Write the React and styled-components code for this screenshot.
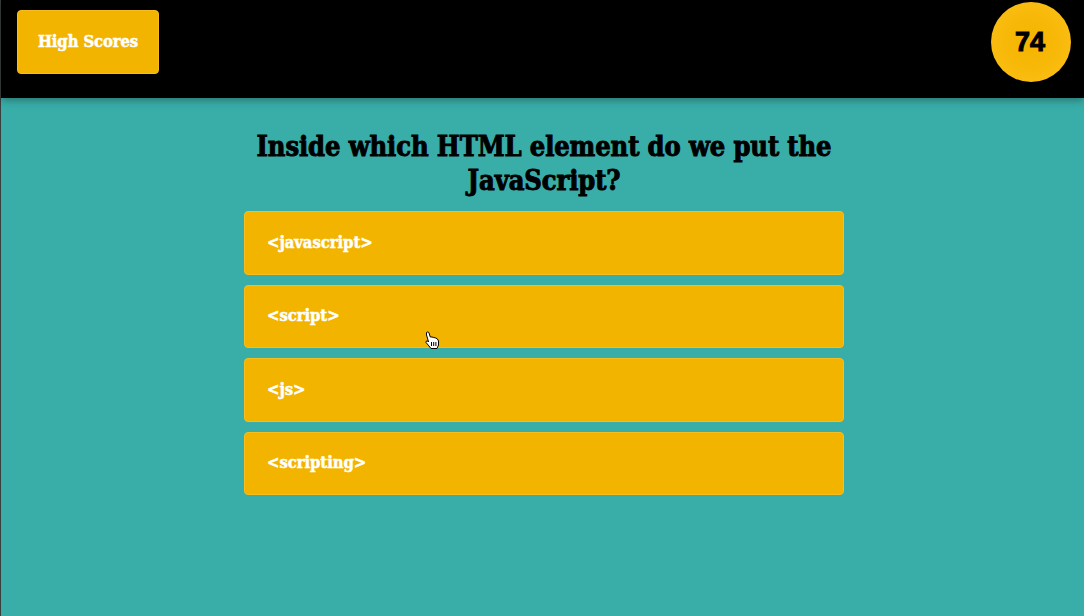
import React from "react";
import styled, { createGlobalStyle } from "styled-components";

const Global = createGlobalStyle`
  html, body { margin: 0; padding: 0; height: 100%; overflow: hidden; background: #39ada8; }
  #root { height: 100%; }
  * { box-sizing: border-box; }
`;

const serif = `"DejaVu Serif Condensed", "DejaVu Serif", serif`;

const Page = styled.div`
  position: relative;
  width: 1084px;
  height: 616px;
  background: #39ada8;
  border-left: 1px solid #3a3f3f;
  font-family: ${serif};
  font-weight: 700;
`;

const Header = styled.header`
  height: 98px;
  background: #000;
  display: flex;
  align-items: flex-start;
  justify-content: space-between;
  padding: 2px 13px 0 16px;
  box-shadow: 0 2px 8px rgba(0, 0, 0, 0.35);
`;

const ScoresButton = styled.button`
  margin-top: 8px;
  width: 142px;
  height: 64px;
  background: #f3b400;
  border: 1px solid #f6bd1c;
  border-radius: 4px;
  color: #fff;
  font: 700 16.5px ${serif};
  letter-spacing: -0.1px;
  padding: 0 0 2px;
  -webkit-text-stroke: 0.5px #fff;
`;

const Timer = styled.div`
  width: 80px;
  height: 80px;
  border-radius: 50%;
  background: radial-gradient(circle, #f5b400 0%, #f7b808 45%, #fdc11a 100%);
  display: flex;
  align-items: center;
  justify-content: center;
  padding-right: 2px;
  color: #000;
  font: 700 27px "Liberation Sans", sans-serif;
  -webkit-text-stroke: 1px #000;
`;

const Main = styled.main`
  width: 600px;
  margin-left: 243px;
  padding-top: 32px;
`;

const Question = styled.h1`
  margin: 0 0 13px;
  padding: 0 8px;
  text-align: center;
  color: #000;
  font: 700 27px/34px ${serif};
  letter-spacing: -0.1px;
  -webkit-text-stroke: 0.9px #000;
`;

const Answers = styled.div`
  display: flex;
  flex-direction: column;
  gap: 10px;
`;

const Answer = styled.button`
  height: 63.5px;
  padding: 0 0 1px 22px;
  text-align: left;
  background: #f3b400;
  border: 1px solid #f6bd1c;
  border-radius: 4px;
  color: #fff;
  font: 700 16.5px ${serif};
  letter-spacing: -0.05px;
  -webkit-text-stroke: 0.5px #fff;
`;

const CursorMark = styled.svg`
  position: absolute;
  left: 423px;
  top: 331px;
  width: 16px;
  height: 19px;
`;

const answers = ["<javascript>", "<script>", "<js>", "<scripting>"];

export default function App() {
  return (
    <Page>
      <Global />
      <Header>
        <ScoresButton>High Scores</ScoresButton>
        <Timer>74</Timer>
      </Header>
      <Main>
        <Question>Inside which HTML element do we put the JavaScript?</Question>
        <Answers>
          {answers.map((a) => (
            <Answer key={a}>{a}</Answer>
          ))}
        </Answers>
      </Main>
      <CursorMark viewBox="0 0 16 19">
        <path
          d="M2.5 1.5 C3.5 .5 4.8 1 5 2 L6.3 6 L8 6 L9.8 6.5 L11.8 7 L13.5 8 L14.5 10 L14.5 14 L13 17.5 L7 17.5 L5 15 L2 11.5 L2.3 10 L4 10 L4.6 11 L2.5 4 Z"
          fill="#fff"
          stroke="#000"
          strokeWidth="1"
          strokeLinejoin="round"
        />
        <path d="M7.5 11v4M9.7 11v4M11.9 11v4" stroke="#000" strokeWidth="1" />
      </CursorMark>
    </Page>
  );
}
